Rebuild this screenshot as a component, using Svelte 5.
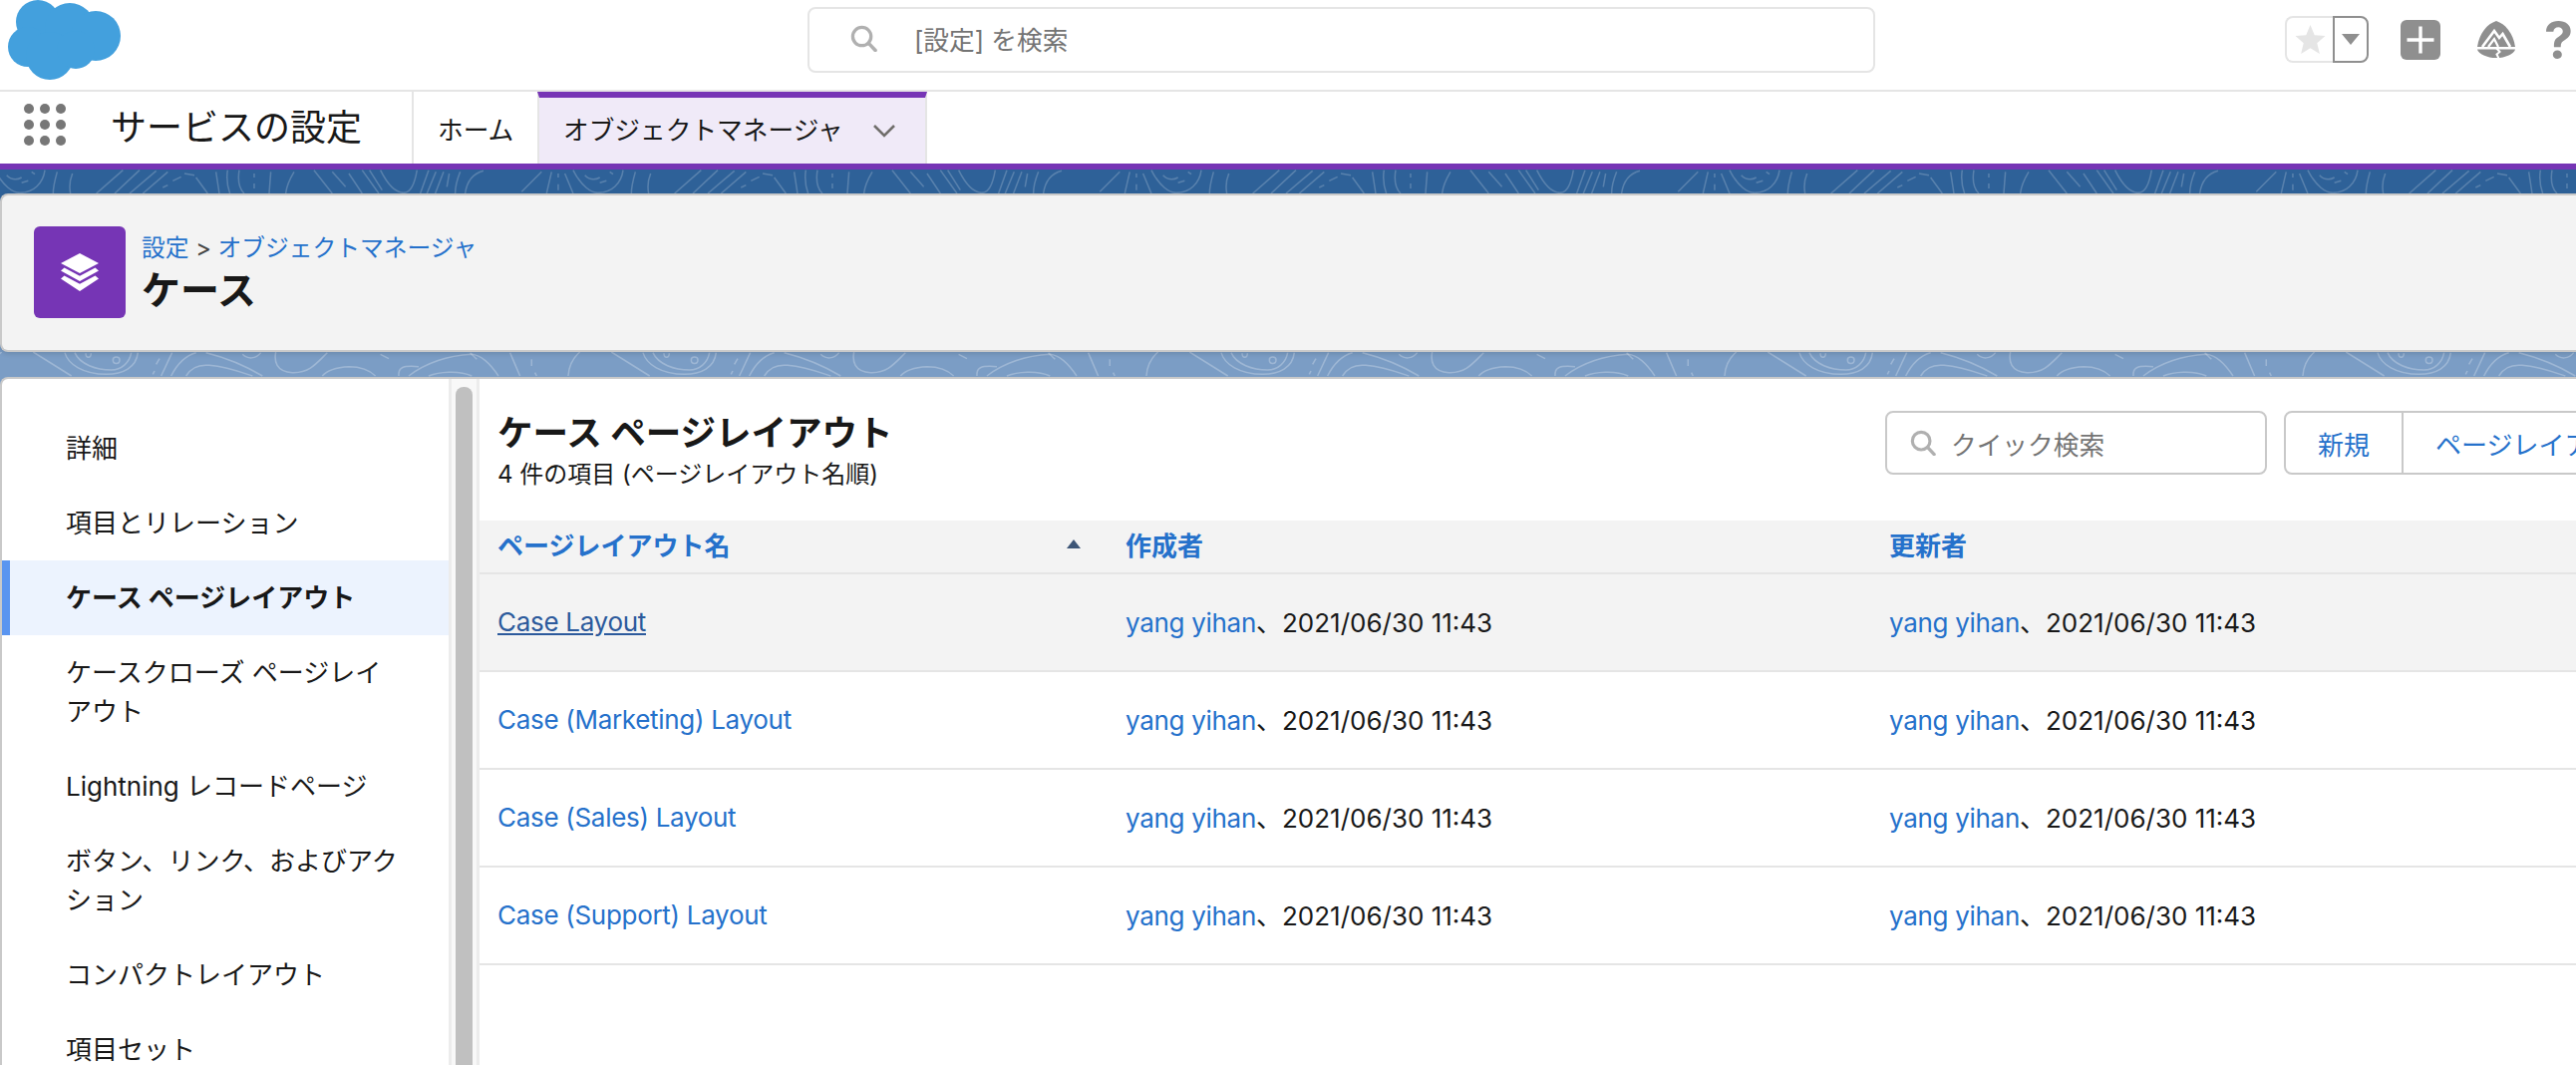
<script>
  const sideItems = [
    { label: "詳細" },
    { label: "項目とリレーション" },
    { label: "ケース ページレイアウト", active: true },
    { label: "ケースクローズ ページレイアウト" },
    { label: "Lightning レコードページ" },
    { label: "ボタン、リンク、およびアクション" },
    { label: "コンパクトレイアウト" },
    { label: "項目セット" },
  ];

  const layouts = ["Case Layout", "Case (Marketing) Layout", "Case (Sales) Layout", "Case (Support) Layout"];
  const stamp = "2021/06/30 11:43";

  // contour lines of the banner, repeat every 580px
  const darkLines = [
    "M-15 20C10 70 40 88 60 88C100 88 130 60 135 20", "M1725 20C1750 70 1780 88 1800 88", "M20 35C35 50 50 50 65 42", "M65 58L85 52", "M95 25L105 32",
    "M172 25C165 50 160 70 160 90", "M218 30C210 50 208 70 212 90",
    "M370 20L290 90", "M420 20L345 90", "M470 22L390 90", "M505 25L430 90", "M545 40L520 52", "M505 65L490 72", "M585 35L555 30", "M590 42L625 90",
    "M650 25L660 90", "M685 20C680 50 685 70 692 90", "M720 20C715 50 720 75 735 90", "M765 30V42", "M765 60V75", "M815 25L810 90", "M885 25C870 50 862 70 860 90",
    "M945 20L1000 90", "M1000 25L1040 70", "M1050 30L1090 90", "M1090 20L1140 90", "M1112 20L1150 80",
    "M1145 20C1165 60 1190 88 1215 88C1240 88 1250 50 1255 20",
    "M1290 20L1265 90", "M1312 25L1285 90", "M1335 25L1310 90", "M1352 30L1345 70", "M1385 25C1375 50 1370 70 1370 90", "M1455 22C1425 30 1405 55 1400 90",
    "M1630 25L1570 85", "M1660 25L1645 90", "M1680 30V42", "M1680 62V80", "M1700 30L1725 90",
  ];
  const lightLines = [
    "M100 18L215 90", "M195 20C205 55 250 85 320 85C370 85 410 65 415 20", "M225 20C240 55 290 72 335 72C365 72 390 50 395 20",
    "M340 42C340 30 360 30 360 42C360 56 340 56 340 42", "M258 22C258 38 274 38 274 22", "M480 38L470 55", "M465 75L460 85", "M518 20L485 90",
    "M590 20C555 30 530 60 515 90", "M560 90C575 65 600 55 630 58C680 62 730 80 760 90", "M620 20C680 35 740 60 790 90", "M730 25C745 40 770 40 785 20",
    "M830 18C825 45 830 78 880 80C930 82 950 55 985 20", "M1145 25L1170 38", "M970 90C985 72 1010 64 1050 62C1090 62 1115 75 1130 90",
    "M1200 90C1198 65 1210 58 1260 62", "M1230 90C1270 60 1330 30 1420 25C1450 28 1480 60 1500 90", "M1290 90C1320 78 1380 72 1420 90", "M1415 20L1435 40",
    "M1535 20L1565 90", "M1600 40V60", "M1610 80L1615 90", "M1710 90C1712 60 1725 35 1745 18", "M-30 90C-28 60 -15 35 5 18",
  ];
</script>

<div class="app">
  <header class="top">
    <svg class="logo" viewBox="0 0 114 80" aria-hidden="true">
      <g fill="#43a0dd">
        <circle cx="30" cy="22" r="22" />
        <circle cx="62" cy="28" r="25" />
        <circle cx="88" cy="36" r="25" />
        <circle cx="20" cy="47" r="20" />
        <circle cx="42" cy="56" r="24" />
        <circle cx="68" cy="50" r="19" />
      </g>
    </svg>
    <div class="global-search">
      <svg class="glass" viewBox="0 0 28 28" aria-hidden="true">
        <circle cx="12" cy="12" r="9.5" fill="none" stroke="#b0b0b0" stroke-width="3.4" />
        <path d="M19 19L26 26.5" stroke="#b0b0b0" stroke-width="3.6" stroke-linecap="round" />
      </svg>
      <span>[設定] を検索</span>
    </div>
    <div class="actions">
      <div class="fav">
        <div class="fav-star">
          <svg viewBox="0 0 32 30" aria-hidden="true">
            <path fill="#e5e5e5" d="M16 0L20.4 10.6L31.5 11.4L23 18.8L25.7 30L16 24L6.3 30L9 18.8L.5 11.4L11.6 10.6Z" />
          </svg>
        </div>
        <div class="fav-menu"><i></i></div>
      </div>
      <div class="plus">
        <svg viewBox="0 0 40 40" aria-hidden="true">
          <path d="M20 6.5V33.5M6.5 20H33.5" stroke="#fff" stroke-width="3.4" />
        </svg>
      </div>
      <svg class="trail" viewBox="0 0 38 37" aria-hidden="true">
        <path fill="#8f8f8f" d="M19 0C28 3 36 12 38 26H0C2 12 10 3 19 0Z" />
        <path d="M5 26L17 10L22 17L25.5 13L33 26" fill="none" stroke="#fff" stroke-width="2.6" />
        <path d="M11 26L17 18L21 26" fill="none" stroke="#fff" stroke-width="2.2" />
        <path fill="#8f8f8f" d="M0 28.4H38C37 33 28 37 19 37C10 37 1 33 0 28.4Z" />
        <path d="M19 27L22.5 31L19.5 33.5L21.5 37.5" fill="none" stroke="#fff" stroke-width="2" />
      </svg>
      <span class="help">?</span>
    </div>
  </header>

  <nav class="nav">
    <div class="launcher">
      {#each Array(9) as _}
        <i></i>
      {/each}
    </div>
    <div class="app-name">サービスの設定</div>
    <div class="tab">ホーム</div>
    <div class="tab current">
      オブジェクトマネージャ
      <svg viewBox="0 0 24 14" aria-hidden="true">
        <path d="M2 2L12 12L22 2" fill="none" stroke="#706e6b" stroke-width="2.6" />
      </svg>
    </div>
  </nav>

  <div class="stage">
    <svg class="contours" aria-hidden="true">
      <defs>
        <pattern id="dark-contour" width="580" height="24" patternUnits="userSpaceOnUse">
          <g transform="scale(0.3333) translate(0,-18)" fill="none" stroke="#fff" stroke-opacity="0.2" stroke-width="4.5">
            {#each darkLines as d}
              <path {d} />
            {/each}
          </g>
        </pattern>
        <pattern id="light-contour" y="183" width="580" height="25" patternUnits="userSpaceOnUse">
          <g transform="scale(0.3333) translate(0,-18)" fill="none" stroke="#fff" stroke-opacity="0.26" stroke-width="4.5">
            {#each lightLines as d}
              <path {d} />
            {/each}
          </g>
        </pattern>
      </defs>
      <rect width="100%" height="24" fill="url(#dark-contour)" />
      <rect y="183" width="100%" height="25" fill="url(#light-contour)" />
    </svg>

    <section class="card">
      <div class="object-icon">
        <svg viewBox="0 0 38 38" aria-hidden="true">
          <path fill="#fff" d="M19 0L38 10L19 20L0 10Z" />
          <path fill="#fff" d="M3.5 14.5L19 22.8L34.5 14.5L38 17.5L19 28L0 17.5Z" />
          <path fill="#fff" d="M3.5 22.5L19 30.8L34.5 22.5L38 25.5L19 38L0 25.5Z" />
        </svg>
      </div>
      <div class="titles">
        <div class="crumbs"><a>設定</a> &gt; <a>オブジェクトマネージャ</a></div>
        <h1>ケース</h1>
      </div>
    </section>

    <div class="panels">
      <aside class="side">
        {#each sideItems as item}
          <div class="side-item" class:active={item.active}>{item.label}</div>
        {/each}
      </aside>
      <div class="scroll"><div class="thumb"></div></div>
      <main class="main">
        <div class="main-head">
          <div class="heading">
            <h2>ケース ページレイアウト</h2>
            <p>4 件の項目 (ページレイアウト名順)</p>
          </div>
          <div class="quick">
            <svg viewBox="0 0 28 28" aria-hidden="true">
              <circle cx="12" cy="12" r="9.5" fill="none" stroke="#b0b0b0" stroke-width="3.4" />
              <path d="M19 19L26 26.5" stroke="#b0b0b0" stroke-width="3.6" stroke-linecap="round" />
            </svg>
            <span>クイック検索</span>
          </div>
          <div class="btn-group">
            <button>新規</button>
            <button>ページレイアウトの割り当て</button>
          </div>
        </div>
        <table>
          <thead>
            <tr>
              <th class="name-col"><div class="sort"><span>ページレイアウト名</span><i></i></div></th>
              <th class="user-col">作成者</th>
              <th>更新者</th>
            </tr>
          </thead>
          <tbody>
            {#each layouts as name, i}
              <tr class:hovered={i === 0}>
                <td class="name-cell"><a class="layout-link">{name}</a></td>
                <td><a>yang yihan</a>、{stamp}</td>
                <td><a>yang yihan</a>、{stamp}</td>
              </tr>
            {/each}
          </tbody>
        </table>
      </main>
    </div>
  </div>
</div>

<style>
  :global(body) {
    margin: 0;
    background: #fff;
  }

  .app {
    width: 2584px;
    height: 1068px;
    overflow: hidden;
    display: flex;
    flex-direction: column;
    font-family: Inter, "Noto Sans CJK JP", sans-serif;
    font-size: 26px;
    color: #181818;
  }

  a {
    color: #2571cb;
  }

  td a {
    letter-spacing: -0.3px;
  }

  .top {
    height: 90px;
    flex: none;
    box-sizing: content-box;
    border-bottom: 2px solid #e5e5e5;
    display: flex;
    align-items: flex-start;
  }

  .logo {
    width: 114px;
    height: 80px;
    margin-left: 8px;
    flex: none;
  }

  .global-search {
    margin: 7px 0 0 688px;
    width: 1071px;
    height: 66px;
    box-sizing: border-box;
    border: 2px solid #e5e5e5;
    border-radius: 8px;
    display: flex;
    align-items: center;
    padding: 0 0 4px 41px;
    color: #747474;
    font-size: 25.7px;
  }

  .glass {
    width: 27px;
    height: 27px;
    margin-right: 37px;
  }

  .actions {
    margin-left: auto;
    padding: 16px 3px 0 0;
    display: flex;
    align-items: flex-start;
  }

  .fav {
    display: flex;
    height: 47px;
    width: 84px;
  }

  .fav-star {
    width: 48px;
    box-sizing: border-box;
    border: 2px solid #e5e5e5;
    border-right: 0;
    border-radius: 8px 0 0 8px;
    display: flex;
    align-items: center;
    justify-content: center;
  }

  .fav-star svg {
    width: 31px;
    height: 29px;
  }

  .fav-menu {
    width: 36px;
    box-sizing: border-box;
    border: 2px solid #8f8f8f;
    border-radius: 0 8px 8px 0;
    display: flex;
    align-items: center;
    justify-content: center;
  }

  .fav-menu i {
    width: 0;
    height: 0;
    border-left: 9px solid transparent;
    border-right: 9px solid transparent;
    border-top: 11px solid #8f8f8f;
  }

  .plus {
    margin: 4px 0 0 32px;
    width: 40px;
    height: 40px;
    border-radius: 6px;
    background: #8f8f8f;
  }

  .plus svg {
    display: block;
  }

  .trail {
    width: 38px;
    height: 37px;
    margin: 5px 0 0 37px;
  }

  .help {
    margin-left: 29px;
    font-size: 52px;
    line-height: 50px;
    font-weight: 700;
    color: #8f8f8f;
    width: 29px;
  }

  .nav {
    height: 72px;
    flex: none;
    border-bottom: 6px solid #7635b5;
    display: flex;
    align-items: stretch;
  }

  .launcher {
    width: 48px;
    height: 48px;
    margin: 12px 0 0 24px;
    display: grid;
    grid-template-columns: repeat(3, 10px);
    grid-auto-rows: 10px;
    gap: 6px;
  }

  .launcher i {
    border-radius: 50%;
    background: #777;
  }

  .app-name {
    margin-left: 39px;
    width: 302px;
    font-size: 36px;
    line-height: 72px;
    white-space: nowrap;
  }

  .tab {
    box-sizing: border-box;
    border-left: 2px solid #e5e5e5;
    padding: 0 0 0 24px;
    display: flex;
    align-items: center;
    width: 126px;
    font-size: 25.7px;
    white-space: nowrap;
  }

  .tab.current {
    width: 391px;
    background: #f0eaf8;
    border-right: 2px solid #e5e5e5;
    border-top: 6px solid #7635b5;
    padding: 0 0 6px 24px;
  }

  .tab.current svg {
    width: 24px;
    height: 14px;
    margin: 6px 0 0 29px;
  }

  .stage {
    flex: 1;
    min-height: 0;
    position: relative;
    display: flex;
    flex-direction: column;
    padding-top: 24px;
    background: linear-gradient(#2e6198 0, #2e6198 24px, #7b9dc5 183px);
  }

  .contours {
    position: absolute;
    top: 0;
    left: 0;
    width: 100%;
    height: 208px;
  }

  .card {
    position: relative;
    height: 159px;
    flex: none;
    box-sizing: border-box;
    margin-bottom: 25px;
    background: #f3f3f3;
    border: 2px solid #c9c9c9;
    border-right: 0;
    border-radius: 8px 0 0 8px;
    box-shadow: 0 2px 5px rgba(0, 0, 0, 0.12);
    display: flex;
    align-items: center;
    gap: 16px;
    padding: 0 0 2px 32px;
  }

  .object-icon {
    width: 92px;
    height: 92px;
    border-radius: 6px;
    background: #7635b5;
    display: flex;
    align-items: center;
    justify-content: center;
  }

  .object-icon svg {
    width: 38px;
    height: 38px;
  }

  .titles {
    padding-top: 2px;
  }

  .crumbs {
    font-size: 23.75px;
    line-height: 32px;
    color: #444;
  }

  h1 {
    margin: 3px 0 0;
    font-size: 39px;
    line-height: 46px;
    font-weight: 700;
  }

  .panels {
    position: relative;
    flex: 1;
    min-height: 0;
    display: flex;
    background: #fff;
    border-top: 2px solid #c9c9c9;
    border-left: 2px solid #c9c9c9;
    border-top-left-radius: 8px;
  }

  .side {
    width: 448px;
    flex: none;
    padding-top: 32px;
  }

  .side-item {
    padding: 18px 44px 18px 64px;
    line-height: 39px;
  }

  .side-item.active {
    font-weight: 700;
    background: #ecf3fe;
    box-shadow: inset 8px 0 0 #5a95f0;
  }

  .scroll {
    width: 31px;
    flex: none;
    box-sizing: border-box;
    background: #f8f8f8;
    border-left: 3px solid #ececec;
    border-right: 3px solid #ececec;
    padding: 8px 4px 0;
  }

  .thumb {
    height: 100%;
    background: #c0c0c0;
    border-radius: 8px 8px 0 0;
  }

  .main {
    flex: 1;
    min-width: 0;
    overflow: hidden;
  }

  .main-head {
    height: 142px;
    box-sizing: border-box;
    padding: 32px 0 0 18px;
    display: flex;
    align-items: flex-start;
  }

  .heading {
    flex: 0 0 1392px;
  }

  h2 {
    margin: 1px 0 0;
    font-size: 35.5px;
    line-height: 44px;
    font-weight: 700;
  }

  .heading p {
    margin: 0;
    font-size: 24px;
    line-height: 38px;
  }

  .quick {
    flex: none;
    width: 383px;
    height: 64px;
    box-sizing: border-box;
    border: 2px solid #c9c9c9;
    border-radius: 8px;
    display: flex;
    align-items: center;
    gap: 15px;
    padding-left: 23px;
    color: #747474;
    font-size: 25.7px;
  }

  .quick svg {
    width: 26px;
    height: 26px;
  }

  .btn-group {
    flex: none;
    margin-left: 17px;
    height: 64px;
    display: flex;
    box-sizing: border-box;
    border: 2px solid #c9c9c9;
    border-radius: 8px;
    white-space: nowrap;
  }

  .btn-group button {
    font: inherit;
    color: #2571cb;
    background: none;
    border: 0;
    padding: 0 32px;
  }

  .btn-group button + button {
    border-left: 2px solid #c9c9c9;
  }

  table {
    width: 100%;
    table-layout: fixed;
    border-collapse: separate;
    border-spacing: 0;
  }

  th {
    height: 54px;
    box-sizing: border-box;
    padding: 0 0 6px 18px;
    background: #f3f3f3;
    border-bottom: 2px solid #e5e5e5;
    text-align: left;
    font-weight: 700;
    color: #2571cb;
  }

  .name-col {
    width: 630px;
  }

  .user-col {
    width: 766px;
  }

  .sort {
    display: flex;
    justify-content: space-between;
    align-items: center;
    padding-right: 27px;
  }

  .sort i {
    width: 0;
    height: 0;
    border-left: 7px solid transparent;
    border-right: 7px solid transparent;
    border-bottom: 9px solid #3e5677;
  }

  td {
    height: 98px;
    box-sizing: border-box;
    padding: 0 0 3px 18px;
    border-bottom: 2px solid #e5e5e5;
    white-space: nowrap;
  }

  td.name-cell {
    padding-bottom: 1px;
  }

  tr.hovered td {
    background: #f3f3f3;
  }

  .hovered .layout-link {
    color: #2c5a9c;
    text-decoration: underline;
  }
</style>
